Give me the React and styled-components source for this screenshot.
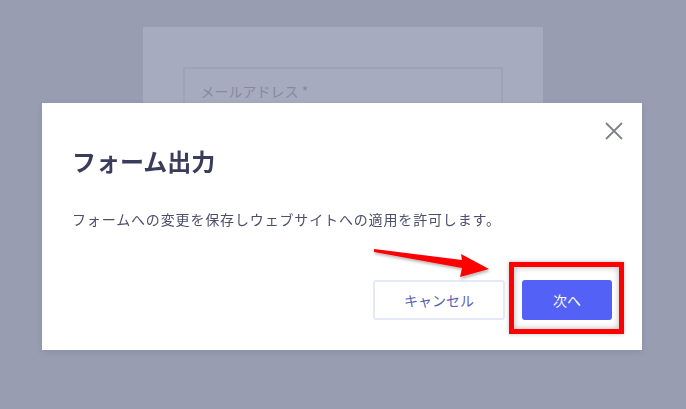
import styled, { createGlobalStyle } from "styled-components";

const GlobalStyle = createGlobalStyle`
  html, body {
    margin: 0;
    padding: 0;
    background: #989db2;
    font-family: "Noto Sans CJK JP", "Noto Sans", sans-serif;
  }
`;

const Page = styled.div`
  width: 686px;
  height: 409px;
  overflow: hidden;
  display: flex;
  justify-content: center;
  padding-top: 27px;
  box-sizing: border-box;
`;

const FormCard = styled.div`
  width: 400px;
  height: 260px;
  margin-left: -1px;
  background: #a6abc0;
  padding: 40px 40px 0;
  box-sizing: border-box;
`;

const Field = styled.div`
  height: 60px;
  border: 2px solid #9ea3b8;
  padding: 12px 16px;
  box-sizing: border-box;
  font-size: 14px;
  color: #868aa0;
`;

const Modal = styled.div`
  position: fixed;
  left: 42px;
  top: 103px;
  width: 600px;
  height: 247px;
  background: #ffffff;
  box-sizing: border-box;
  padding: 43px 30px 30px;
  display: flex;
  flex-direction: column;
  box-shadow: 0 2px 6px rgba(60, 64, 90, 0.15);
`;

const Close = styled.button`
  position: absolute;
  right: 18px;
  top: 18px;
  width: 20px;
  height: 20px;
  padding: 0;
  border: none;
  background: none;
  cursor: pointer;
`;

const Title = styled.h2`
  margin: 0;
  font-size: 24px;
  font-weight: 700;
  line-height: 30px;
  color: #393c5b;
`;

const Message = styled.p`
  margin: 33px 0 0;
  font-size: 14px;
  letter-spacing: 0.85px;
  line-height: 20px;
  color: #4b4f6b;
`;

const Actions = styled.div`
  margin-top: auto;
  display: flex;
  justify-content: flex-end;
  gap: 17px;
  position: relative;
`;

const Button = styled.button`
  height: 40px;
  width: ${(p) => p.$w}px;
  border-radius: 3px;
  font-family: inherit;
  font-size: 14px;
  cursor: pointer;
  border: 2px solid ${(p) => (p.$primary ? "#5361f6" : "#e6e8f9")};
  background: ${(p) => (p.$primary ? "#5361f6" : "#ffffff")};
  color: ${(p) => (p.$primary ? "#ffffff" : "#5a60b2")};
`;

const Highlight = styled.div`
  position: relative;
`;

const HighlightFrame = styled.div`
  position: absolute;
  left: -13px;
  top: -18px;
  right: -12px;
  bottom: -14px;
  border: 5px solid #ff0000;
  box-shadow: inset 0 0 6px rgba(0, 0, 0, 0.3), 0 0 4px rgba(0, 0, 0, 0.25);
  pointer-events: none;
`;

const Arrow = styled.svg`
  position: absolute;
  left: 302px;
  top: -32px;
  overflow: visible;
`;

export default function App() {
  return (
    <>
      <GlobalStyle />
      <Page>
        <FormCard>
          <Field>メールアドレス *</Field>
        </FormCard>
      </Page>
      <Modal>
        <Close aria-label="close">
          <svg width="20" height="20" viewBox="0 0 20 20">
            <path d="M2 2 L18 18 M18 2 L2 18" stroke="#808288" strokeWidth="1.8" fill="none" />
          </svg>
        </Close>
        <Title>フォーム出力</Title>
        <Message>フォームへの変更を保存しウェブサイトへの適用を許可します。</Message>
        <Actions>
          <Arrow width="120" height="32" viewBox="0 0 120 32">
            <defs>
              <filter id="as" x="-10%" y="-30%" width="130%" height="180%">
                <feDropShadow dx="1" dy="2" stdDeviation="1.5" floodColor="#000" floodOpacity="0.3" />
              </filter>
            </defs>
            <path
              d="M0 1 L88 12 L87 6 L115 21 L86 29 L88 20 L0 4 Z"
              fill="#ff0000"
              filter="url(#as)"
            />
          </Arrow>
          <Button $w={132}>キャンセル</Button>
          <Highlight>
            <HighlightFrame />
            <Button $primary $w={90}>次へ</Button>
          </Highlight>
        </Actions>
      </Modal>
    </>
  );
}
